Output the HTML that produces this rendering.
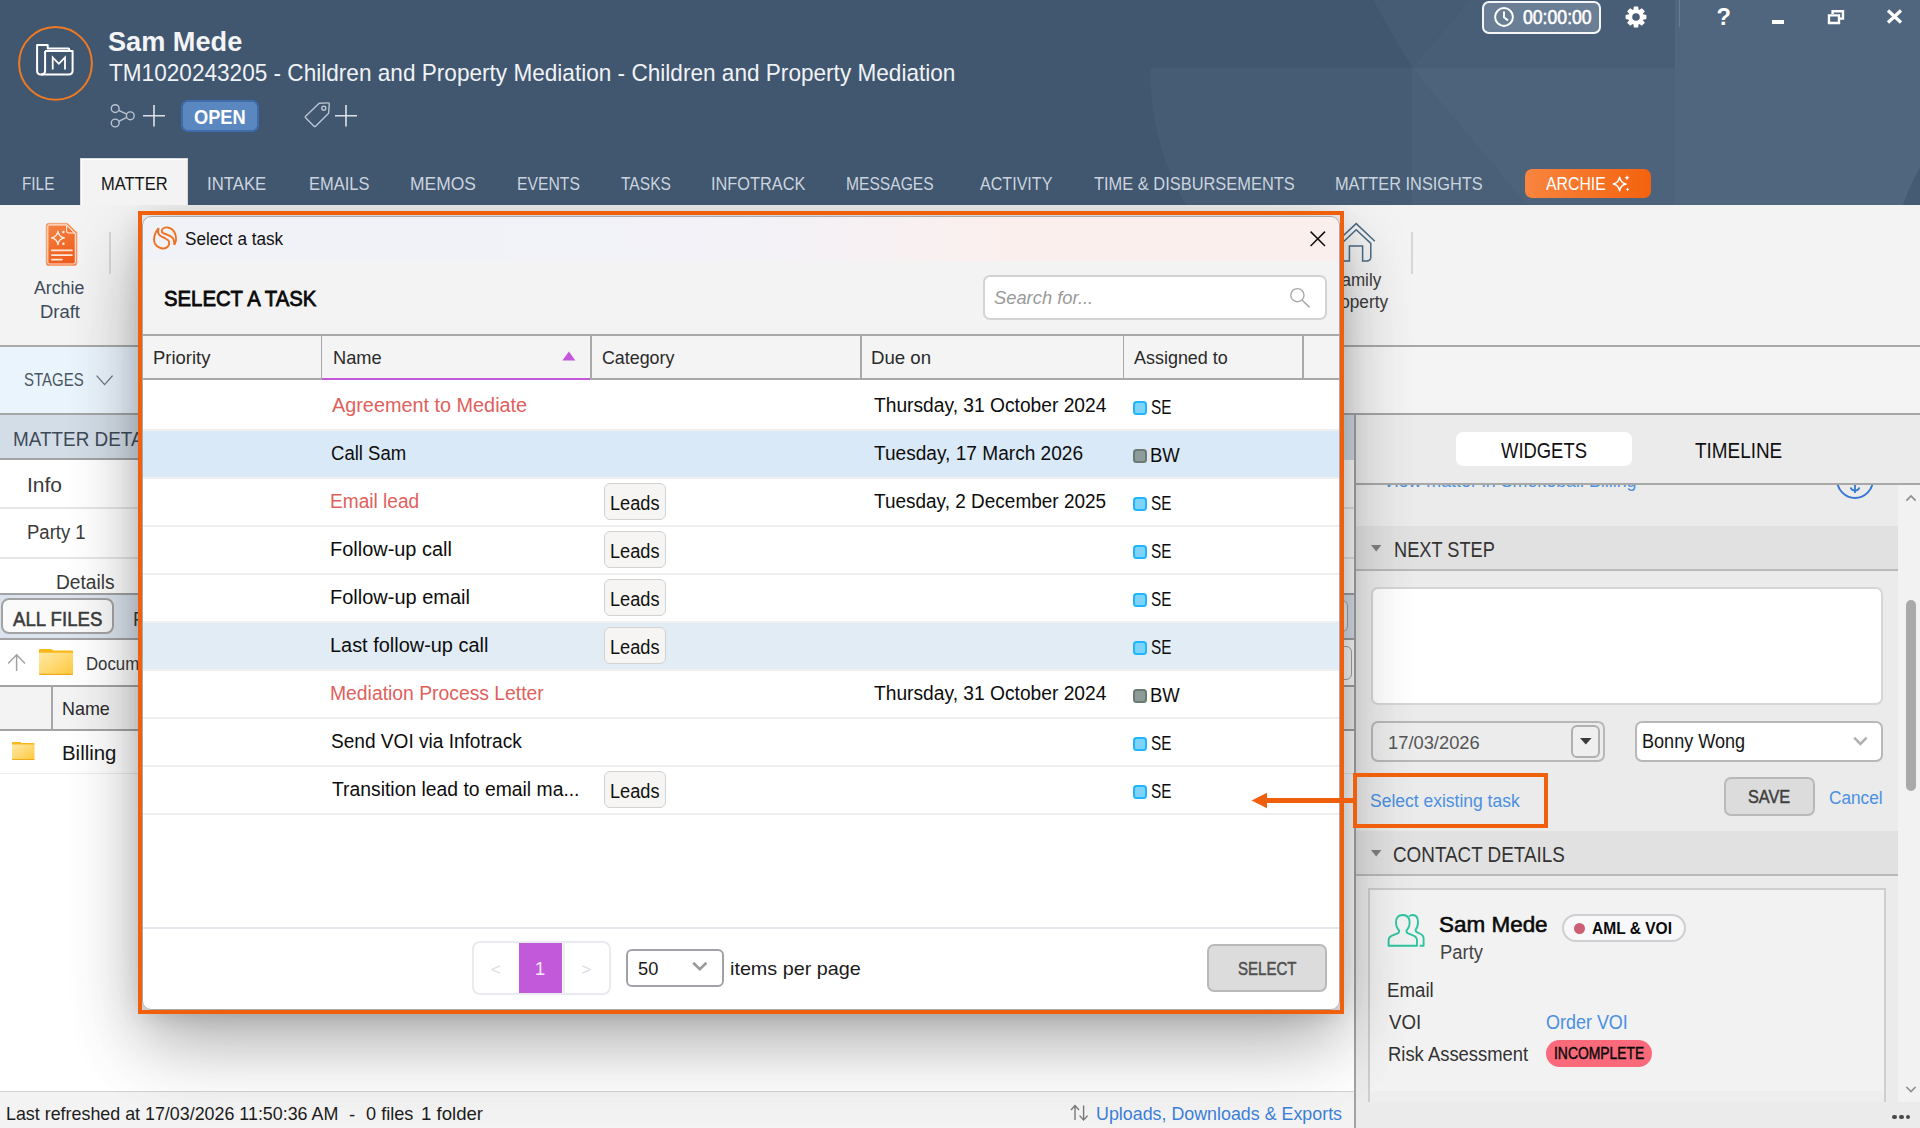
<!DOCTYPE html>
<html lang="en"><head><meta charset="utf-8"><title>Sam Mede - Select a task</title>
<style>
*{box-sizing:border-box;margin:0;padding:0}
html,body{width:1920px;height:1128px;overflow:hidden;background:#fff}
body{font-family:"Liberation Sans",sans-serif;position:relative}
#app{position:absolute;left:0;top:0;width:1920px;height:1128px;overflow:hidden}
.t{position:absolute;white-space:nowrap;line-height:20px;height:20px;display:block;transform-origin:0 0}
svg{position:absolute;overflow:visible}
</style></head><body><div id="app">
<div style="position:absolute;left:0px;top:0px;width:1920px;height:205px;background:#41566f;overflow:hidden"><svg style="left:0;top:0" width="1920" height="205" viewBox="0 0 1920 205"><path d="M1150 67.5 H1412 V205 H1186 C1160 160 1150 115 1150 67.5Z" fill="#465b74"/><path d="M1412 67.5 H1675 V205 H1412Z" fill="#4d637c"/><path d="M1412 67.5 L1527 205 H1412Z" fill="#4a6079"/><path d="M1373 0 L1412 67.5 L1470 0Z" fill="#465c75"/><path d="M1470 0 L1412 67.5 H1675 V0Z" fill="#485e77"/><path d="M1675 0 H1920 V205 H1675Z" fill="#50667f"/><path d="M1920 168 C1912 182 1907 193 1903 205 H1920Z" fill="#455a73"/></svg></div>
<svg style="left:0;top:0" width="110" height="110" viewBox="0 0 110 110"><circle cx="55.5" cy="63.4" r="36.4" fill="none" stroke="#ef7a22" stroke-width="2"/><g fill="none" stroke="#ffffff" stroke-width="2" stroke-linejoin="round"><path d="M45.1 50.9 H72.6 V70.6 Q72.6 74.6 68.6 74.6 H40.9 Q37.1 74.6 37.1 70.8 V45.05 H47.7 V48.4 H68.4 Q69.3 48.4 69.3 49.4 V50.6"/><path d="M45.1 50.9 V70.6 Q45.1 74.6 41.1 74.6"/><path d="M52.7 69.4 V57.4 L58.85 63.8 L65 57.4 V69.4" stroke-width="1.8" stroke-linejoin="miter"/></g></svg>
<span class="t" style="left:107.50px;top:32px;font-size:27.03px;transform:scaleX(1.0045);color:#f2f4f7;font-weight:700;">Sam Mede</span>
<span class="t" style="left:108.50px;top:63px;font-size:23.11px;transform:scaleX(0.9776);color:#f0f3f6;">TM1020243205 - Children and Property Mediation - Children and Property Mediation</span>
<svg style="left:110px;top:103px" width="26" height="26" viewBox="0 0 26 26" ><g fill="none" stroke="#b9c5d3" stroke-width="1.4"><circle cx="5.2" cy="5.6" r="3.9"/><circle cx="5.2" cy="20" r="3.9"/><circle cx="20.3" cy="12.8" r="3.9"/><path d="M8.7 7.3 L16.8 11.2 M8.7 18.3 L16.8 14.4"/></g></svg>
<svg style="left:143px;top:105px" width="22" height="22" viewBox="0 0 22 22" ><path d="M11 0 V21.5 M0 10.7 H22" stroke="#dce1e8" stroke-width="1.6" fill="none"/></svg>
<div style="position:absolute;left:181px;top:100.2px;width:78px;height:32.2px;background:#5b87c1;border:2px solid #406bab;border-radius:7px"></div>
<span class="t" style="left:194.40px;top:107px;font-size:19.48px;transform:scaleX(0.9363);color:#ffffff;font-weight:700;">OPEN</span>
<svg style="left:304px;top:102px" width="27" height="26" viewBox="0 0 27 26" ><g fill="none" stroke="#b9c5d3" stroke-width="1.4" stroke-linejoin="round"><path d="M15.2 1.2 L24.4 0.9 Q25.4 0.9 25.3 1.9 L24.6 11.2 L11.6 24.2 Q10.8 25 10 24.2 L1.6 15.8 Q0.8 15 1.6 14.2 Z"/><circle cx="19.8" cy="6.3" r="2"/></g></svg>
<svg style="left:335px;top:105px" width="22" height="22" viewBox="0 0 22 22" ><path d="M11 0 V21.5 M0 10.7 H22" stroke="#dce1e8" stroke-width="1.6" fill="none"/></svg>
<div style="position:absolute;left:1482px;top:0.5px;width:119px;height:33px;background:#6a7e95;border:2px solid #f4f6f8;border-radius:7px"></div>
<svg style="left:1494px;top:7px" width="20" height="20" viewBox="0 0 20 20" ><circle cx="10" cy="10" r="8.9" fill="none" stroke="#fff" stroke-width="2"/><path d="M10 4.6 V10.3 L14 13.6" fill="none" stroke="#fff" stroke-width="2"/></svg>
<span class="t" style="left:1522.50px;top:7px;font-size:20.35px;transform:scaleX(0.8669);color:#ffffff;-webkit-text-stroke:0.6px #ffffff;">00:00:00</span>
<svg style="left:1625px;top:5.5px" width="22" height="22" viewBox="0 0 22 22" ><path d="M21.39 8.89 L21.39 13.11 L18.11 13.68 L17.92 14.14 L19.84 16.86 L16.86 19.84 L14.14 17.92 L13.68 18.11 L13.11 21.39 L8.89 21.39 L8.32 18.11 L7.86 17.92 L5.14 19.84 L2.16 16.86 L4.08 14.14 L3.89 13.68 L0.61 13.11 L0.61 8.89 L3.89 8.32 L4.08 7.86 L2.16 5.14 L5.14 2.16 L7.86 4.08 L8.32 3.89 L8.89 0.61 L13.11 0.61 L13.68 3.89 L14.14 4.08 L16.86 2.16 L19.84 5.14 L17.92 7.86 L18.11 8.32Z M11 7.2 A3.8 3.8 0 1 0 11 14.8 A3.8 3.8 0 1 0 11 7.2Z" fill="#fff" fill-rule="evenodd"/></svg>
<div style="position:absolute;left:1678.5px;top:0px;width:1.3px;height:27px;background:#6c7d93"></div>
<span class="t" style="left:1716.40px;top:7px;font-size:23.69px;transform:scaleX(1.0000);color:#ffffff;font-weight:700;">?</span>
<div style="position:absolute;left:1772px;top:20.3px;width:11.5px;height:3.6px;background:#fff"></div>
<svg style="left:1827px;top:9px" width="18" height="16" viewBox="0 0 18 16" ><g fill="none" stroke="#fff" stroke-width="2.4"><path d="M5.6 5 V2.2 H16 V9.6 H12.4"/><path d="M2 6.4 H12 V14 H2Z" stroke-width="2.4"/></g></svg>
<svg style="left:1886px;top:9px" width="17" height="15" viewBox="0 0 17 15" ><path d="M2 1.5 L15 13.5 M15 1.5 L2 13.5" stroke="#fff" stroke-width="3.2" fill="none"/></svg>
<div style="position:absolute;left:80px;top:158px;width:108px;height:48px;background:#f3f3f3;border:1.5px solid #d9d9d9;border-bottom:none;box-shadow:inset 1px 1px 0 #fff"></div>
<span class="t" style="left:21.50px;top:174px;font-size:18.60px;transform:scaleX(0.8240);color:#cbd4df;">FILE</span>
<span class="t" style="left:207.00px;top:174px;font-size:18.60px;transform:scaleX(0.9000);color:#cbd4df;">INTAKE</span>
<span class="t" style="left:309.10px;top:174px;font-size:18.60px;transform:scaleX(0.8854);color:#cbd4df;">EMAILS</span>
<span class="t" style="left:409.90px;top:174px;font-size:18.60px;transform:scaleX(0.9383);color:#cbd4df;">MEMOS</span>
<span class="t" style="left:517.00px;top:174px;font-size:18.60px;transform:scaleX(0.8463);color:#cbd4df;">EVENTS</span>
<span class="t" style="left:621.00px;top:174px;font-size:18.60px;transform:scaleX(0.8390);color:#cbd4df;">TASKS</span>
<span class="t" style="left:710.90px;top:174px;font-size:18.60px;transform:scaleX(0.8782);color:#cbd4df;">INFOTRACK</span>
<span class="t" style="left:845.90px;top:174px;font-size:18.60px;transform:scaleX(0.8400);color:#cbd4df;">MESSAGES</span>
<span class="t" style="left:980.00px;top:174px;font-size:18.60px;transform:scaleX(0.8650);color:#cbd4df;">ACTIVITY</span>
<span class="t" style="left:1093.90px;top:174px;font-size:18.60px;transform:scaleX(0.8833);color:#cbd4df;">TIME &amp; DISBURSEMENTS</span>
<span class="t" style="left:1334.90px;top:174px;font-size:18.60px;transform:scaleX(0.8792);color:#cbd4df;">MATTER INSIGHTS</span>
<span class="t" style="left:100.50px;top:174px;font-size:18.60px;transform:scaleX(0.8869);color:#151515;">MATTER</span>
<div style="position:absolute;left:1525px;top:168.8px;width:126px;height:29.2px;background:linear-gradient(90deg,#f8853f,#f4620e);border-radius:7px"></div>
<span class="t" style="left:1546.00px;top:174px;font-size:18.60px;transform:scaleX(0.8504);color:#ffffff;">ARCHIE</span>
<svg style="left:1612px;top:174px" width="20" height="20" viewBox="0 0 20 20" ><g fill="none" stroke="#fff" stroke-width="1.5" stroke-linejoin="round"><path d="M7.6 3.2 Q8.6 9 14 10 Q8.6 11 7.6 16.8 Q6.6 11 1.2 10 Q6.6 9 7.6 3.2Z"/></g><path d="M15 1.2 Q15.4 3.4 17.6 3.8 Q15.4 4.2 15 6.4 Q14.6 4.2 12.4 3.8 Q14.6 3.4 15 1.2Z M15.6 13.4 Q15.9 15 17.5 15.3 Q15.9 15.6 15.6 17.2 Q15.3 15.6 13.7 15.3 Q15.3 15 15.6 13.4Z" fill="#fff"/></svg>
<div style="position:absolute;left:0px;top:205px;width:1920px;height:141px;background:#f3f3f3"></div>
<svg style="left:45px;top:222px" width="34" height="45" viewBox="0 0 34 45" ><defs><linearGradient id="ad" x1="0" y1="0" x2="0.3" y2="1"><stop offset="0" stop-color="#f58545"/><stop offset="1" stop-color="#ee5d1c"/></linearGradient></defs><path d="M3.4 1.4 H22.6 L31.8 10.6 V41 Q31.8 43.5 29.3 43.5 H3.4 Q1.3 43.5 1.3 41 V3.6 Q1.3 1.4 3.4 1.4Z" fill="url(#ad)" stroke="#f4a273" stroke-width="1"/><path d="M4 2.9 H21.6 L30.3 11.6 V40.4 Q30.3 42 28.7 42 H4 Q2.8 42 2.8 40.4 V4.2 Q2.8 2.9 4 2.9Z" fill="none" stroke="#fdeadf" stroke-width="1.1"/><path d="M21.6 3.6 V8.8 Q21.6 11 23.8 11 H29.6" fill="none" stroke="#fdeadf" stroke-width="1.1"/><path d="M12.9 9.2 Q13.7 15.1 19.4 15.9 Q13.7 16.7 12.9 22.6 Q12.1 16.7 6.4 15.9 Q12.1 15.1 12.9 9.2Z" fill="none" stroke="#fdeee5" stroke-width="1.3" stroke-linejoin="round"/><circle cx="18.4" cy="9.9" r="1.25" fill="#fdeee5"/><circle cx="18.4" cy="21.8" r="1.25" fill="#fdeee5"/><path d="M6.8 28.4 H27 M6.8 33.1 H27 M6.8 37.6 H17" stroke="#fde6da" stroke-width="1.7" stroke-linecap="round"/></svg>
<span class="t" style="left:33.90px;top:278px;font-size:18.90px;transform:scaleX(0.9385);color:#3f4b5b;">Archie</span>
<span class="t" style="left:39.90px;top:302px;font-size:18.90px;transform:scaleX(0.9768);color:#3f4b5b;">Draft</span>
<div style="position:absolute;left:109px;top:232px;width:1.6px;height:42px;background:#d6d6d6"></div>
<svg style="left:1336px;top:221px" width="42" height="42" viewBox="0 0 42 42" ><g fill="none" stroke="#4b6b86" stroke-width="1.5" stroke-linejoin="miter"><path d="M1.2 20.2 L20.2 2.6 L38.8 20.2"/><path d="M4 24 L20.2 8.8 L34.8 22.4 V36 Q34.8 40 30.4 40 H26.6 V25 H13.4 V40 H5.6 V24"/></g></svg>
<span class="t" style="left:1330.50px;top:270px;font-size:18.90px;transform:scaleX(0.9028);color:#3b3b3b;">Family</span>
<span class="t" style="left:1323.00px;top:292px;font-size:18.90px;transform:scaleX(0.9107);color:#3b3b3b;">Property</span>
<div style="position:absolute;left:1411.3px;top:232px;width:1.6px;height:42px;background:#d6d6d6"></div>
<div style="position:absolute;left:0px;top:345px;width:1920px;height:2px;background:#a9a9a9"></div>
<div style="position:absolute;left:0px;top:347px;width:1920px;height:66px;background:#f4f4f4"></div>
<div style="position:absolute;left:0px;top:347px;width:1344px;height:66px;background:#eaf4fd"></div>
<span class="t" style="left:23.80px;top:370px;font-size:18.60px;transform:scaleX(0.8071);color:#4c5661;">STAGES</span>
<svg style="left:96px;top:374px" width="18" height="13" viewBox="0 0 18 13" ><path d="M0.6 1.6 L8.6 10.6 L16.6 1.6" fill="none" stroke="#6a7380" stroke-width="1.3"/></svg>
<div style="position:absolute;left:0px;top:413px;width:1920px;height:2px;background:#a6a6a6"></div>
<div style="position:absolute;left:0px;top:415px;width:1354px;height:677px;background:#fff"></div>
<div style="position:absolute;left:0px;top:415px;width:1354px;height:43px;background:#d3dde7"></div>
<span class="t" style="left:13.20px;top:429px;font-size:20.93px;transform:scaleX(0.9036);color:#3f4a58;">MATTER DETAILS</span>
<div style="position:absolute;left:0px;top:458px;width:1354px;height:2px;background:#a3a3a3"></div>
<span class="t" style="left:27.40px;top:475px;font-size:20.35px;transform:scaleX(1.0308);color:#3a3a3a;">Info</span>
<div style="position:absolute;left:0px;top:507px;width:1354px;height:2px;background:#e6e6e6"></div>
<span class="t" style="left:27.40px;top:522px;font-size:20.35px;transform:scaleX(0.9099);color:#3a3a3a;">Party 1</span>
<div style="position:absolute;left:0px;top:557px;width:1354px;height:2px;background:#e6e6e6"></div>
<span class="t" style="left:55.60px;top:572px;font-size:20.35px;transform:scaleX(0.9427);color:#3a3a3a;">Details</span>
<div style="position:absolute;left:0px;top:593px;width:1354px;height:2px;background:#a3a3a3"></div>
<div style="position:absolute;left:0px;top:595px;width:1354px;height:43px;background:#dbe4ee"></div>
<div style="position:absolute;left:1px;top:598.4px;width:113px;height:35.8px;background:#fafafa;border:2px solid #a3a3a3;border-radius:8px"></div>
<span class="t" style="left:12.80px;top:609px;font-size:20.35px;transform:scaleX(0.9155);color:#3c3c3c;-webkit-text-stroke:0.55px #3c3c3c;">ALL FILES</span>
<span class="t" style="left:132.50px;top:609px;font-size:20.35px;transform:scaleX(0.9251);color:#3c3c3c;">FAVOURITES</span>
<div style="position:absolute;left:0px;top:638px;width:1354px;height:2px;background:#a3a3a3"></div>
<svg style="left:7px;top:653px" width="20" height="20" viewBox="0 0 20 20" ><path d="M9.6 18 V2.2 M1.2 10.4 L9.6 1.8 L18 10.4" fill="none" stroke="#a2a2a2" stroke-width="1.5"/></svg>
<svg style="left:39px;top:648.5px" width="34" height="26" viewBox="0 0 100 100" preserveAspectRatio="none"><defs><linearGradient id="fg39" x1="0" y1="0" x2="1" y2="1"><stop offset="0" stop-color="#ffe9a6"/><stop offset="1" stop-color="#ffc83d"/></linearGradient></defs><path d="M0 3 Q0 0 3 0 H33 Q37 0 39 2 L42 6 H97 Q100 6 100 9 V20 H0Z" fill="#fbb81c"/><path d="M0 17 Q0 14 3 14 H97 Q100 14 100 17 V96 Q100 100 96 100 H4 Q0 100 0 96Z" fill="url(#fg39)"/><path d="M0 95 H100 V96 Q100 100 96 100 H4 Q0 100 0 96Z" fill="#f2a91a"/></svg>
<span class="t" style="left:86.00px;top:654px;font-size:18.60px;transform:scaleX(0.9024);color:#3a3a3a;">Documents</span>
<div style="position:absolute;left:0px;top:685px;width:1354px;height:2px;background:#a3a3a3"></div>
<div style="position:absolute;left:0px;top:687px;width:1354px;height:42px;background:#f3f3f3"></div>
<div style="position:absolute;left:51px;top:687px;width:2px;height:42px;background:#a8a8a8"></div>
<span class="t" style="left:62.40px;top:699px;font-size:18.31px;transform:scaleX(0.9799);color:#2b2b2b;">Name</span>
<div style="position:absolute;left:0px;top:729px;width:1354px;height:2px;background:#a3a3a3"></div>
<svg style="left:12px;top:741.5px" width="22.5" height="18" viewBox="0 0 100 100" preserveAspectRatio="none"><defs><linearGradient id="fg12" x1="0" y1="0" x2="1" y2="1"><stop offset="0" stop-color="#ffe9a6"/><stop offset="1" stop-color="#ffc83d"/></linearGradient></defs><path d="M0 3 Q0 0 3 0 H33 Q37 0 39 2 L42 6 H97 Q100 6 100 9 V20 H0Z" fill="#fbb81c"/><path d="M0 17 Q0 14 3 14 H97 Q100 14 100 17 V96 Q100 100 96 100 H4 Q0 100 0 96Z" fill="url(#fg12)"/><path d="M0 95 H100 V96 Q100 100 96 100 H4 Q0 100 0 96Z" fill="#f2a91a"/></svg>
<span class="t" style="left:61.60px;top:743px;font-size:20.35px;transform:scaleX(1.0033);color:#151515;">Billing</span>
<div style="position:absolute;left:0px;top:772.5px;width:1354px;height:1.6px;background:#ececec"></div>
<div style="position:absolute;left:1344px;top:415px;width:10px;height:45px;background:#d3dde7"></div>
<div style="position:absolute;left:1354px;top:415px;width:2px;height:677px;background:#a3a3a3"></div>
<div style="position:absolute;left:1344px;top:593px;width:10px;height:2px;background:#a3a3a3"></div>
<div style="position:absolute;left:1344px;top:595px;width:10px;height:43px;background:#dbe4ee"></div>
<div style="position:absolute;left:1334px;top:600px;width:14px;height:32px;background:#f3f3f3;border:1.5px solid #a5a5a5;border-radius:6px"></div>
<div style="position:absolute;left:1334px;top:646px;width:18px;height:34px;background:#fff;border:1.5px solid #a5a5a5;border-radius:6px"></div>
<div style="position:absolute;left:1344px;top:685px;width:10px;height:2px;background:#a3a3a3"></div>
<div style="position:absolute;left:1344px;top:687px;width:10px;height:42px;background:#f3f3f3"></div>
<div style="position:absolute;left:1344px;top:729px;width:10px;height:2px;background:#a3a3a3"></div>
<div style="position:absolute;left:1356px;top:415px;width:564px;height:713px;background:#ebebeb"></div>
<div style="position:absolute;left:1456px;top:432px;width:176px;height:34px;background:#fff;border-radius:7px"></div>
<span class="t" style="left:1501.00px;top:441px;font-size:21.80px;transform:scaleX(0.8449);color:#111;">WIDGETS</span>
<span class="t" style="left:1695.00px;top:441px;font-size:21.80px;transform:scaleX(0.8670);color:#111;">TIMELINE</span>
<div style="position:absolute;left:1356px;top:483px;width:564px;height:1.8px;background:#a8a8a8"></div>
<div style="position:absolute;left:1356px;top:485px;width:542px;height:41px;overflow:hidden"><span class="t" style="left:26.80px;top:-14px;font-size:18.90px;transform:scaleX(0.9444);color:#4a90e2;">View matter in Smokeball Billing</span><svg style="left:478.5999999999999px;top:-25.30000000000001px" width="40" height="40"><circle cx="20" cy="20" r="17.9" fill="none" stroke="#3577d4" stroke-width="2"/><path d="M20 24 V33 M15.6 27.6 Q16.4 30.6 20 30.6 Q23.6 30.6 24.4 27.6" fill="none" stroke="#3577d4" stroke-width="1.8"/></svg></div>
<div style="position:absolute;left:1356px;top:526px;width:542px;height:43.5px;background:#e1e1e1"></div>
<div style="position:absolute;left:1356px;top:569px;width:542px;height:2px;background:#b9b9b9"></div>
<svg style="left:1371px;top:545px" width="11" height="7" viewBox="0 0 11 7" ><path d="M0 0 H10.4 L5.2 6.4Z" fill="#808080"/></svg>
<span class="t" style="left:1393.60px;top:540px;font-size:21.80px;transform:scaleX(0.8351);color:#333;">NEXT STEP</span>
<div style="position:absolute;left:1371.3px;top:586.6px;width:511.4px;height:118.6px;background:#fff;border:2px solid #d6d6d6;border-radius:7px"></div>
<div style="position:absolute;left:1371px;top:720.6px;width:233.6px;height:41px;background:#ececec;border:2px solid #b8b8b8;border-radius:7px"></div>
<span class="t" style="left:1388.20px;top:733px;font-size:18.60px;transform:scaleX(0.9857);color:#555;">17/03/2026</span>
<div style="position:absolute;left:1571px;top:724.6px;width:29.4px;height:33px;background:#efefef;border:2px solid #b0b0b0;border-radius:6px"></div>
<svg style="left:1580px;top:738px" width="12" height="7" viewBox="0 0 12 7" ><path d="M0 0 H11.6 L5.8 6.6Z" fill="#3a3a3a"/></svg>
<div style="position:absolute;left:1635px;top:720.6px;width:248px;height:41px;background:#fff;border:2px solid #b8b8b8;border-radius:7px"></div>
<span class="t" style="left:1642.40px;top:731px;font-size:19.48px;transform:scaleX(0.9285);color:#151515;">Bonny Wong</span>
<svg style="left:1853px;top:736px" width="15" height="10" viewBox="0 0 15 10" ><path d="M1.2 1.6 L7.4 7.8 L13.6 1.6" fill="none" stroke="#b0b0b0" stroke-width="2.6"/></svg>
<span class="t" style="left:1370.40px;top:791px;font-size:18.90px;transform:scaleX(0.9258);color:#4a90e2;">Select existing task</span>
<div style="position:absolute;left:1724px;top:777.4px;width:91px;height:38.4px;background:#dcdcdc;border:2px solid #b9b9b9;border-radius:7px"></div>
<span class="t" style="left:1747.80px;top:787px;font-size:18.60px;transform:scaleX(0.8757);color:#3f3f3f;-webkit-text-stroke:0.5px #3f3f3f;">SAVE</span>
<span class="t" style="left:1829.20px;top:788px;font-size:18.90px;transform:scaleX(0.9116);color:#4a90e2;">Cancel</span>
<div style="position:absolute;left:1356px;top:830.5px;width:542px;height:43.5px;background:#e1e1e1"></div>
<div style="position:absolute;left:1356px;top:873.6px;width:542px;height:2px;background:#b9b9b9"></div>
<svg style="left:1371px;top:850px" width="11" height="7" viewBox="0 0 11 7" ><path d="M0 0 H10.4 L5.2 6.4Z" fill="#808080"/></svg>
<span class="t" style="left:1392.80px;top:845px;font-size:21.80px;transform:scaleX(0.8650);color:#333;">CONTACT DETAILS</span>
<div style="position:absolute;left:1368px;top:888.3px;width:518px;height:213.7px;background:#f2f2f2;border:2px solid #cecece;border-bottom:none"></div>
<div style="position:absolute;left:1370px;top:1091px;width:514px;height:11px;background:#eeeeee"></div>
<svg style="left:1387px;top:913px" width="38" height="34" viewBox="0 0 38 34" ><g fill="none" stroke="#2ec4a0" stroke-width="1.9" stroke-linejoin="round"><path d="M1.6 32.8 V27.6 Q1.6 23.8 5.6 22.4 L10.6 20.4 Q12.4 19.6 12.2 17.6 Q9 14.6 9 9.6 Q9 2 15.8 2 Q22.6 2 22.6 9.6 Q22.6 14.6 19.4 17.6 Q19.2 19.6 21 20.4 L26 22.4 Q30 23.8 30 27.6 V32.8Z"/><path d="M22 3.4 Q23.6 2 25.6 2 Q31 2 31 9 Q31 14 28.6 16.6 Q28.4 18.6 30.2 19.4 L33.6 21 Q36.6 22.4 36.6 25.6 V32.8 H32.6"/></g></svg>
<span class="t" style="left:1439.20px;top:915px;font-size:21.80px;transform:scaleX(1.0305);color:#0a0a0a;-webkit-text-stroke:0.55px #0a0a0a;">Sam Mede</span>
<span class="t" style="left:1439.80px;top:942px;font-size:19.77px;transform:scaleX(0.9307);color:#444;">Party</span>
<div style="position:absolute;left:1562px;top:913.8px;width:124px;height:28.4px;background:#f8f8fb;border:2px solid #cfcfcf;border-radius:14.2px"></div>
<div style="position:absolute;left:1574px;top:922.5px;width:11px;height:11px;background:#cc5f74;border-radius:50%"></div>
<span class="t" style="left:1592.20px;top:919px;font-size:15.99px;transform:scaleX(0.9724);color:#0a0a0a;font-weight:700;">AML &amp; VOI</span>
<span class="t" style="left:1387.20px;top:980px;font-size:20.35px;transform:scaleX(0.9181);color:#333;">Email</span>
<span class="t" style="left:1388.80px;top:1012px;font-size:20.35px;transform:scaleX(0.9193);color:#333;">VOI</span>
<span class="t" style="left:1545.80px;top:1012px;font-size:20.35px;transform:scaleX(0.8827);color:#4a90e2;">Order VOI</span>
<span class="t" style="left:1388.20px;top:1044px;font-size:20.35px;transform:scaleX(0.9051);color:#333;">Risk Assessment</span>
<div style="position:absolute;left:1546px;top:1040px;width:105.5px;height:27px;background:#fb6a7b;border-radius:14px"></div>
<span class="t" style="left:1554.20px;top:1044px;font-size:15.70px;transform:scaleX(0.8859);color:#0a0a0a;-webkit-text-stroke:0.45px #0a0a0a;">INCOMPLETE</span>
<div style="position:absolute;left:1898px;top:485px;width:22px;height:617px;background:#f2f2f2"></div>
<div style="position:absolute;left:1906.2px;top:600.3px;width:9.8px;height:190.5px;background:#a9a9a9;border-radius:5px"></div>
<svg style="left:1905px;top:494px" width="13" height="9" viewBox="0 0 13 9" ><path d="M1.4 6.6 L6 2 L10.6 6.6" fill="none" stroke="#8f8f8f" stroke-width="1.7"/></svg>
<svg style="left:1905px;top:1084.6px" width="13" height="9" viewBox="0 0 13 9" ><path d="M1.4 2 L6 6.6 L10.6 2" fill="none" stroke="#8f8f8f" stroke-width="1.7"/></svg>
<div style="position:absolute;left:0px;top:1090.5px;width:1354px;height:1.6px;background:#d2d2d2"></div>
<div style="position:absolute;left:0px;top:1092px;width:1354px;height:36px;background:#f3f3f3"></div>
<span class="t" style="left:6.40px;top:1104px;font-size:18.60px;transform:scaleX(0.9606);color:#1c1c1c;">Last refreshed at 17/03/2026 11:50:36 AM</span>
<span class="t" style="left:349.00px;top:1105px;font-size:18.60px;transform:scaleX(1.0000);color:#1c1c1c;">-</span>
<span class="t" style="left:366.00px;top:1104px;font-size:18.60px;transform:scaleX(0.9756);color:#1c1c1c;">0 files</span>
<span class="t" style="left:420.50px;top:1104px;font-size:18.60px;transform:scaleX(1.0006);color:#1c1c1c;">1 folder</span>
<svg style="left:1070px;top:1104px" width="20" height="18" viewBox="0 0 20 18" ><g fill="none" stroke="#7a7a7a" stroke-width="1.4"><path d="M5 16 V2 M1 6 L5 1.6 L9 6"/><path d="M13.6 1.6 V15.6 M9.6 11.6 L13.6 16 L17.6 11.6"/></g></svg>
<span class="t" style="left:1096.20px;top:1104px;font-size:18.90px;transform:scaleX(0.9448);color:#3d7fd9;">Uploads, Downloads &amp; Exports</span>
<div style="position:absolute;left:1354px;top:1092px;width:2px;height:36px;background:#a3a3a3"></div>
<div style="position:absolute;left:1892px;top:1114.8px;width:4.5px;height:4.5px;background:#4a4a4a;border-radius:50%"></div>
<div style="position:absolute;left:1899px;top:1114.8px;width:4.5px;height:4.5px;background:#4a4a4a;border-radius:50%"></div>
<div style="position:absolute;left:1905.8px;top:1114.8px;width:4.5px;height:4.5px;background:#4a4a4a;border-radius:50%"></div>
<div style="position:absolute;left:0px;top:205px;width:1920px;height:923px;overflow:hidden"><div style="position:absolute;left:142px;top:10.5px;width:1198px;height:794.5px;background:#fff;border-radius:9px;box-shadow:0 26px 70px rgba(0,0,0,.30),0 4px 24px rgba(0,0,0,.14),0 44px 90px rgba(0,0,0,.07);"></div></div>
<div style="position:absolute;left:142px;top:215.5px;width:1198px;height:794.5px;border-radius:9px;overflow:hidden;background:#fff"><div style="position:absolute;left:-142px;top:-215.5px;width:1920px;height:1128px">
<div style="position:absolute;left:142px;top:215px;width:1198px;height:46px;background:linear-gradient(90deg,#f0f2f8 0%,#f2f2f7 50%,#fbefee 72%,#fbefee 100%)"></div>
<div style="position:absolute;left:142px;top:261px;width:1198px;height:74px;background:#f3f3f3"></div>
<svg style="left:153px;top:226.6px" width="24" height="23" viewBox="0 0 24 23" ><g fill="none" stroke="#ee7224" stroke-width="1.9" stroke-linejoin="miter" stroke-miterlimit="6"><path d="M5.53 1.03 C5.03 1.85 3.26 4.08 2.50 5.94 C1.74 7.80 1.03 10.31 1.00 12.19 C0.97 14.06 1.49 15.82 2.34 17.19 C3.19 18.55 4.69 19.66 6.09 20.38 C7.50 21.09 9.36 21.57 10.78 21.47 C12.20 21.36 13.70 20.57 14.59 19.75 C15.49 18.93 16.05 17.61 16.16 16.56 C16.26 15.51 16.01 14.38 15.22 13.44 C14.43 12.50 12.67 11.68 11.41 10.94 C10.15 10.20 8.70 9.83 7.66 9.00 C6.61 8.17 5.51 7.27 5.16 5.94 C4.80 4.61 5.47 1.85 5.53 1.03"/><path d="M21.41 17.88 C21.68 17.03 22.92 14.70 23.03 12.81 C23.15 10.93 22.78 8.33 22.09 6.56 C21.41 4.79 20.17 3.20 18.91 2.19 C17.65 1.17 15.94 0.62 14.53 0.47 C13.12 0.31 11.43 0.70 10.47 1.25 C9.51 1.80 8.84 2.96 8.75 3.75 C8.66 4.54 9.05 5.36 9.91 6.00 C10.77 6.64 12.56 6.99 13.91 7.56 C15.25 8.14 16.86 8.66 17.97 9.44 C19.07 10.22 19.96 10.84 20.53 12.25 C21.10 13.66 21.26 16.94 21.41 17.88"/></g></svg>
<span class="t" style="left:184.80px;top:229px;font-size:18.90px;transform:scaleX(0.9073);color:#111;">Select a task</span>
<svg style="left:1309px;top:230px" width="18" height="18" viewBox="0 0 18 18" ><path d="M1.6 1.6 L16 16 M16 1.6 L1.6 16" stroke="#111" stroke-width="1.5" fill="none"/></svg>
<span class="t" style="left:164.40px;top:288px;font-size:22.97px;transform:scaleX(0.8842);color:#0a0a0a;-webkit-text-stroke:0.85px #0a0a0a;">SELECT A TASK</span>
<div style="position:absolute;left:982.8px;top:275.3px;width:344px;height:44.4px;background:#fff;border:2px solid #d3d3d3;border-radius:7px"></div>
<span class="t" style="left:993.80px;top:288px;font-size:18.90px;transform:scaleX(0.9706);color:#9a9a9a;font-style:italic;">Search for...</span>
<svg style="left:1289px;top:287px" width="23" height="22" viewBox="0 0 23 22" ><circle cx="8.4" cy="8.2" r="6.6" fill="none" stroke="#a8a8a8" stroke-width="1.4"/><path d="M13.2 13.2 L20.6 20.4" stroke="#a8a8a8" stroke-width="1.5"/></svg>
<div style="position:absolute;left:142px;top:334.3px;width:1198px;height:1.7px;background:#a9a9a9"></div>
<div style="position:absolute;left:142px;top:336px;width:1198px;height:42.5px;background:#f4f4f4"></div>
<div style="position:absolute;left:142px;top:378.3px;width:1198px;height:1.7px;background:#a9a9a9"></div>
<div style="position:absolute;left:320.6px;top:336px;width:1.7px;height:42.5px;background:#a9a9a9"></div>
<div style="position:absolute;left:590px;top:336px;width:1.7px;height:42.5px;background:#a9a9a9"></div>
<div style="position:absolute;left:860.4px;top:336px;width:1.7px;height:42.5px;background:#a9a9a9"></div>
<div style="position:absolute;left:1122.6px;top:336px;width:1.7px;height:42.5px;background:#a9a9a9"></div>
<div style="position:absolute;left:1302.4px;top:336px;width:1.7px;height:42.5px;background:#a9a9a9"></div>
<div style="position:absolute;left:322.3px;top:377.6px;width:267.7px;height:2.4px;background:#c259db"></div>
<svg style="left:562px;top:351px" width="14" height="10" viewBox="0 0 14 10" ><path d="M0.4 9.4 L6.9 0.4 L13.4 9.4Z" fill="#c259db"/></svg>
<span class="t" style="left:152.60px;top:348px;font-size:18.60px;transform:scaleX(0.9917);color:#2a2a2a;">Priority</span>
<span class="t" style="left:332.60px;top:348px;font-size:18.60px;transform:scaleX(0.9821);color:#2a2a2a;">Name</span>
<span class="t" style="left:601.80px;top:348px;font-size:18.60px;transform:scaleX(0.9585);color:#2a2a2a;">Category</span>
<span class="t" style="left:870.80px;top:348px;font-size:18.60px;transform:scaleX(1.0020);color:#2a2a2a;">Due on</span>
<span class="t" style="left:1134.20px;top:348px;font-size:18.60px;transform:scaleX(0.9653);color:#2a2a2a;">Assigned to</span>
<div style="position:absolute;left:142px;top:429.2px;width:1198px;height:1.8px;background:#efefef"></div>
<span class="t" style="left:331.80px;top:395px;font-size:20.35px;transform:scaleX(0.9748);color:#e0605c;">Agreement to Mediate</span>
<span class="t" style="left:873.90px;top:395px;font-size:20.35px;transform:scaleX(0.9441);color:#0d0d0d;">Thursday, 31 October 2024</span>
<div style="position:absolute;left:1133px;top:401px;width:14px;height:14px;background:#7dd3fc;border:2px solid #1fb6ff;border-radius:3.5px"></div>
<span class="t" style="left:1150.70px;top:397px;font-size:20.35px;transform:scaleX(0.7539);color:#0d0d0d;">SE</span>
<div style="position:absolute;left:142px;top:431px;width:1198px;height:46px;background:#d9e9f7"></div>
<div style="position:absolute;left:142px;top:477.2px;width:1198px;height:1.8px;background:#efefef"></div>
<span class="t" style="left:330.80px;top:443px;font-size:20.35px;transform:scaleX(0.9105);color:#0d0d0d;">Call Sam</span>
<span class="t" style="left:873.90px;top:443px;font-size:20.35px;transform:scaleX(0.9386);color:#0d0d0d;">Tuesday, 17 March 2026</span>
<div style="position:absolute;left:1133px;top:449px;width:14px;height:14px;background:#8d9c98;border:2px solid #6a7b76;border-radius:3.5px"></div>
<span class="t" style="left:1150.20px;top:445px;font-size:20.35px;transform:scaleX(0.9087);color:#0d0d0d;">BW</span>
<div style="position:absolute;left:142px;top:525.2px;width:1198px;height:1.8px;background:#efefef"></div>
<span class="t" style="left:329.80px;top:491px;font-size:20.35px;transform:scaleX(0.9383);color:#e0605c;">Email lead</span>
<div style="position:absolute;left:604.2px;top:483px;width:61.8px;height:36.7px;background:#f6f5f3;border:1.6px solid #d2d2d2;border-radius:6px"></div>
<span class="t" style="left:609.90px;top:493px;font-size:20.35px;transform:scaleX(0.8943);color:#111;">Leads</span>
<span class="t" style="left:873.90px;top:491px;font-size:20.35px;transform:scaleX(0.9331);color:#0d0d0d;">Tuesday, 2 December 2025</span>
<div style="position:absolute;left:1133px;top:497px;width:14px;height:14px;background:#7dd3fc;border:2px solid #1fb6ff;border-radius:3.5px"></div>
<span class="t" style="left:1150.70px;top:493px;font-size:20.35px;transform:scaleX(0.7539);color:#0d0d0d;">SE</span>
<div style="position:absolute;left:142px;top:573.2px;width:1198px;height:1.8px;background:#efefef"></div>
<span class="t" style="left:329.80px;top:539px;font-size:20.35px;transform:scaleX(0.9803);color:#0d0d0d;">Follow-up call</span>
<div style="position:absolute;left:604.2px;top:531px;width:61.8px;height:36.7px;background:#f6f5f3;border:1.6px solid #d2d2d2;border-radius:6px"></div>
<span class="t" style="left:609.90px;top:541px;font-size:20.35px;transform:scaleX(0.8943);color:#111;">Leads</span>
<div style="position:absolute;left:1133px;top:545px;width:14px;height:14px;background:#7dd3fc;border:2px solid #1fb6ff;border-radius:3.5px"></div>
<span class="t" style="left:1150.70px;top:541px;font-size:20.35px;transform:scaleX(0.7539);color:#0d0d0d;">SE</span>
<div style="position:absolute;left:142px;top:621.2px;width:1198px;height:1.8px;background:#efefef"></div>
<span class="t" style="left:329.80px;top:587px;font-size:20.35px;transform:scaleX(0.9821);color:#0d0d0d;">Follow-up email</span>
<div style="position:absolute;left:604.2px;top:579px;width:61.8px;height:36.7px;background:#f6f5f3;border:1.6px solid #d2d2d2;border-radius:6px"></div>
<span class="t" style="left:609.90px;top:589px;font-size:20.35px;transform:scaleX(0.8943);color:#111;">Leads</span>
<div style="position:absolute;left:1133px;top:593px;width:14px;height:14px;background:#7dd3fc;border:2px solid #1fb6ff;border-radius:3.5px"></div>
<span class="t" style="left:1150.70px;top:589px;font-size:20.35px;transform:scaleX(0.7539);color:#0d0d0d;">SE</span>
<div style="position:absolute;left:142px;top:623px;width:1198px;height:46px;background:#e1ecf5"></div>
<div style="position:absolute;left:142px;top:669.2px;width:1198px;height:1.8px;background:#efefef"></div>
<span class="t" style="left:329.80px;top:635px;font-size:20.35px;transform:scaleX(0.9793);color:#0d0d0d;">Last follow-up call</span>
<div style="position:absolute;left:604.2px;top:627px;width:61.8px;height:36.7px;background:#f6f5f3;border:1.6px solid #d2d2d2;border-radius:6px"></div>
<span class="t" style="left:609.90px;top:637px;font-size:20.35px;transform:scaleX(0.8943);color:#111;">Leads</span>
<div style="position:absolute;left:1133px;top:641px;width:14px;height:14px;background:#7dd3fc;border:2px solid #1fb6ff;border-radius:3.5px"></div>
<span class="t" style="left:1150.70px;top:637px;font-size:20.35px;transform:scaleX(0.7539);color:#0d0d0d;">SE</span>
<div style="position:absolute;left:142px;top:717.2px;width:1198px;height:1.8px;background:#efefef"></div>
<span class="t" style="left:329.80px;top:683px;font-size:20.35px;transform:scaleX(0.9501);color:#e0605c;">Mediation Process Letter</span>
<span class="t" style="left:873.90px;top:683px;font-size:20.35px;transform:scaleX(0.9441);color:#0d0d0d;">Thursday, 31 October 2024</span>
<div style="position:absolute;left:1133px;top:689px;width:14px;height:14px;background:#8d9c98;border:2px solid #6a7b76;border-radius:3.5px"></div>
<span class="t" style="left:1150.20px;top:685px;font-size:20.35px;transform:scaleX(0.9087);color:#0d0d0d;">BW</span>
<div style="position:absolute;left:142px;top:765.2px;width:1198px;height:1.8px;background:#efefef"></div>
<span class="t" style="left:330.80px;top:731px;font-size:20.35px;transform:scaleX(0.9374);color:#0d0d0d;">Send VOI via Infotrack</span>
<div style="position:absolute;left:1133px;top:737px;width:14px;height:14px;background:#7dd3fc;border:2px solid #1fb6ff;border-radius:3.5px"></div>
<span class="t" style="left:1150.70px;top:733px;font-size:20.35px;transform:scaleX(0.7539);color:#0d0d0d;">SE</span>
<div style="position:absolute;left:142px;top:813.2px;width:1198px;height:1.8px;background:#efefef"></div>
<span class="t" style="left:331.80px;top:779px;font-size:20.35px;transform:scaleX(0.9503);color:#0d0d0d;">Transition lead to email ma...</span>
<div style="position:absolute;left:604.2px;top:771px;width:61.8px;height:36.7px;background:#f6f5f3;border:1.6px solid #d2d2d2;border-radius:6px"></div>
<span class="t" style="left:609.90px;top:781px;font-size:20.35px;transform:scaleX(0.8943);color:#111;">Leads</span>
<div style="position:absolute;left:1133px;top:785px;width:14px;height:14px;background:#7dd3fc;border:2px solid #1fb6ff;border-radius:3.5px"></div>
<span class="t" style="left:1150.70px;top:781px;font-size:20.35px;transform:scaleX(0.7539);color:#0d0d0d;">SE</span>
<div style="position:absolute;left:142px;top:927.2px;width:1198px;height:1.6px;background:#e6e8ee"></div>
<div style="position:absolute;left:472px;top:941px;width:138.5px;height:53.5px;background:#fff;border:2px solid #e9ebf0;border-radius:8px"></div>
<div style="position:absolute;left:563px;top:943px;width:1.5px;height:49.5px;background:#eceef2"></div>
<div style="position:absolute;left:518.6px;top:943px;width:43.5px;height:49.6px;background:#c259db"></div>
<span class="t" style="left:491.00px;top:959px;font-size:16.50px;transform:scaleX(1.0000);color:#d9dde5;">&lt;</span>
<span class="t" style="left:581.50px;top:959px;font-size:16.50px;transform:scaleX(1.0000);color:#d9dde5;">&gt;</span>
<span class="t" style="left:534.80px;top:959px;font-size:18.90px;transform:scaleX(1.0000);color:#f6e9fb;">1</span>
<div style="position:absolute;left:626.3px;top:949.2px;width:97.4px;height:37.6px;background:#fff;border:2px solid #a0a2a8;border-radius:6px"></div>
<span class="t" style="left:637.80px;top:959px;font-size:18.60px;transform:scaleX(0.9813);color:#1a1a1a;">50</span>
<svg style="left:692px;top:961px" width="16" height="11" viewBox="0 0 16 11" ><path d="M1.2 1.8 L7.8 8.2 L14.4 1.8" fill="none" stroke="#9a9a9a" stroke-width="2.6"/></svg>
<span class="t" style="left:730.20px;top:959px;font-size:18.60px;transform:scaleX(1.0629);color:#1a1a1a;">items per page</span>
<div style="position:absolute;left:1207px;top:944px;width:120px;height:47.6px;background:#dcdcdc;border:2px solid #b9b9b9;border-radius:7px"></div>
<span class="t" style="left:1238.20px;top:959px;font-size:18.60px;transform:scaleX(0.8096);color:#4f4f4f;-webkit-text-stroke:0.5px #4f4f4f;">SELECT</span>
</div></div>
<div style="position:absolute;left:142px;top:215.5px;width:1198px;height:794.5px;border-radius:9px;border:1.6px solid #a9a9a9"></div>
<div style="position:absolute;left:138px;top:211px;width:1206px;height:803px;border:4px solid #f0600c"></div>
<div style="position:absolute;left:1353px;top:773px;width:195px;height:55px;border:4px solid #f0600c"></div>
<div style="position:absolute;left:1266px;top:798.3px;width:88px;height:4.4px;background:#f0600c"></div>
<svg style="left:1251px;top:792px" width="17" height="17" viewBox="0 0 17 17" ><path d="M0.6 8.5 L16 0.8 V16.2Z" fill="#f0600c"/></svg>
</div></body></html>
